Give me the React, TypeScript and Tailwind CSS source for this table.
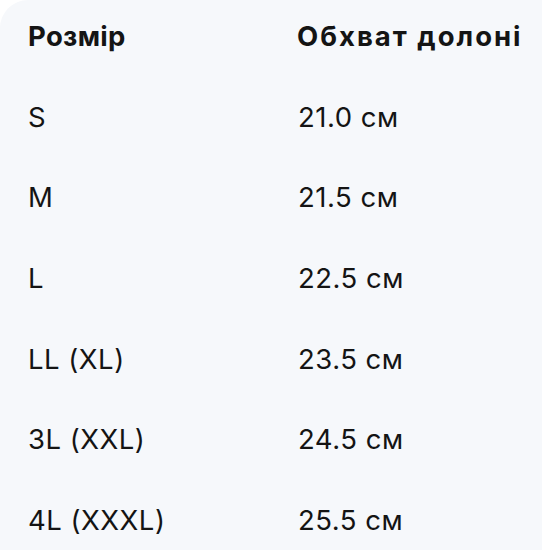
const rows: [string, string][] = [
  ["S", "21.0 см"],
  ["M", "21.5 см"],
  ["L", "22.5 см"],
  ["LL (XL)", "23.5 см"],
  ["3L (XXL)", "24.5 см"],
  ["4L (XXXL)", "25.5 см"],
];

export default function App() {
  return (
    <div className="w-[542px] h-[550px] bg-white overflow-hidden font-['Inter',sans-serif] text-[#141414]">
      <div className="h-full w-full bg-[#f6f8fb] rounded-tl-[28px]">
        <div className="grid grid-cols-[269px_1fr] h-[77px] items-center pl-[28px] pb-[4px] text-[27.5px] font-bold">
          <div className="tracking-[0.3px]">Розмір</div>
          <div className="tracking-[2px] whitespace-nowrap">Обхват долоні</div>
        </div>
        {rows.map(([size, girth]) => (
          <div
            key={size}
            className="grid grid-cols-[270px_1fr] h-[80.7px] items-center pl-[28px] text-[27.5px] tracking-[0.5px]"
          >
            <div>{size}</div>
            <div>{girth}</div>
          </div>
        ))}
      </div>
    </div>
  );
}
